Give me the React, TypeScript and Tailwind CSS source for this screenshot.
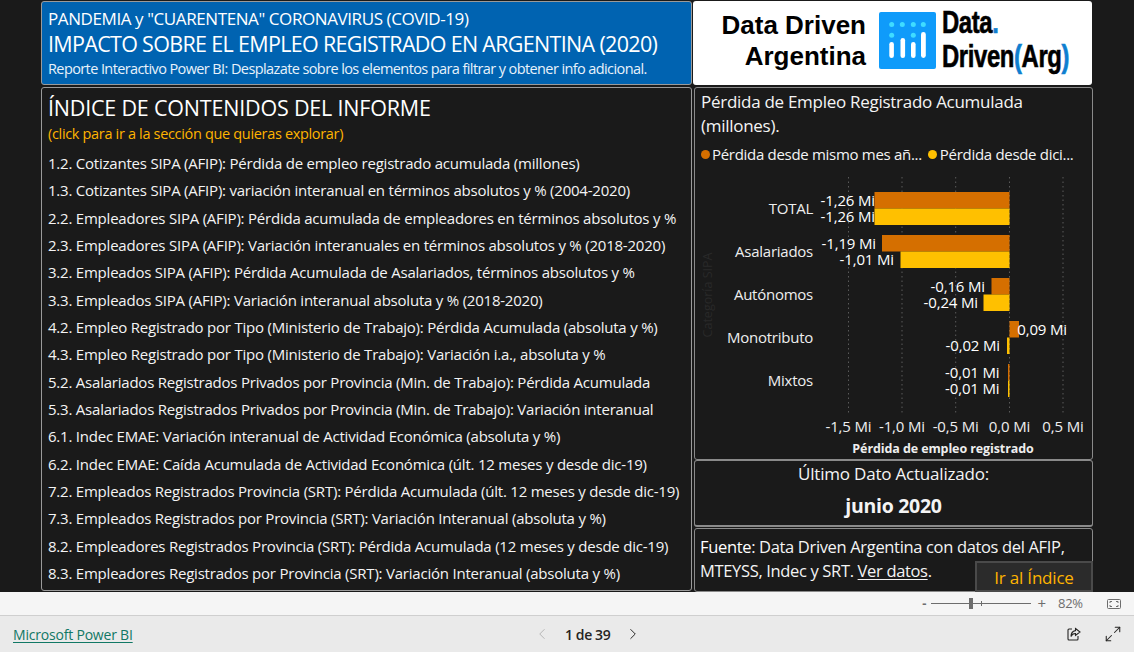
import { ChevronLeft, ChevronRight, Maximize2 } from "lucide-react";

const INDEX_ROWS = [
  "1.2. Cotizantes SIPA (AFIP): Pérdida de empleo registrado acumulada (millones)",
  "1.3. Cotizantes SIPA (AFIP): variación interanual en términos absolutos y % (2004-2020)",
  "2.2. Empleadores SIPA (AFIP): Pérdida acumulada de empleadores en términos absolutos y %",
  "2.3. Empleadores SIPA (AFIP): Variación interanuales en términos absolutos y % (2018-2020)",
  "3.2. Empleados SIPA (AFIP): Pérdida Acumulada de Asalariados, términos absolutos y %",
  "3.3. Empleados SIPA (AFIP): Variación interanual absoluta y % (2018-2020)",
  "4.2. Empleo Registrado por Tipo (Ministerio de Trabajo): Pérdida Acumulada (absoluta y %)",
  "4.3. Empleo Registrado por Tipo (Ministerio de Trabajo): Variación i.a., absoluta y %",
  "5.2. Asalariados Registrados Privados por Provincia (Min. de Trabajo): Pérdida Acumulada",
  "5.3. Asalariados Registrados Privados por Provincia (Min. de Trabajo): Variación interanual",
  "6.1. Indec EMAE: Variación interanual de Actividad Económica (absoluta y %)",
  "6.2. Indec EMAE: Caída Acumulada de Actividad Económica (últ. 12 meses y desde dic-19)",
  "7.2. Empleados Registrados Provincia (SRT): Pérdida Acumulada (últ. 12 meses y desde dic-19)",
  "7.3. Empleados Registrados por Provincia (SRT): Variación Interanual (absoluta y %)",
  "8.2. Empleadores Registrados Provincia (SRT): Pérdida Acumulada (12 meses y desde dic-19)",
  "8.3. Empleadores Registrados por Provincia (SRT): Variación Interanual (absoluta y %)",
];

// x0 is the zero line, coordinates are local to the chart svg
const X0 = 314.5;
const ORANGE = "#d56f00";
const YELLOW = "#ffc000";

const GROUPS = [
  { label: "TOTAL", y: 22, a: -135, b: -135, ta: "-1,26 Mi", tb: "-1,26 Mi", xa: 180, xb: 180 },
  { label: "Asalariados", y: 65, a: -127.5, b: -109, ta: "-1,19 Mi", tb: "-1,01 Mi", xa: 181, xb: 199 },
  { label: "Autónomos", y: 108, a: -18, b: -26, ta: "-0,16 Mi", tb: "-0,24 Mi", xa: 290, xb: 283 },
  { label: "Monotributo", y: 151, a: 9.5, b: -2.5, ta: "0,09 Mi", tb: "-0,02 Mi", xa: 372, xb: 305 },
  { label: "Mixtos", y: 194, a: -1.5, b: -1.5, ta: "-0,01 Mi", tb: "-0,01 Mi", xa: 304.5, xb: 304.5 },
];

const TICKS = [
  { x: 153.5, t: "-1,5 Mi" },
  { x: 207, t: "-1,0 Mi" },
  { x: 260.7, t: "-0,5 Mi" },
  { x: 314.5, t: "0,0 Mi" },
  { x: 368, t: "0,5 Mi" },
];

function Bar({ y, w, color }: { y: number; w: number; color: string }) {
  const x = w < 0 ? X0 + w : X0;
  return <rect x={x} y={y} width={Math.abs(w)} height={16.5} fill={color} />;
}

function LossChart() {
  return (
    <svg width="396" height="290" className="block" fontFamily="'Open Sans', sans-serif">
      {TICKS.map((t) => (
        <line key={t.x} x1={t.x} x2={t.x} y1="7" y2="245" stroke="#5a5a5a" strokeDasharray="1.5 3" />
      ))}
      {GROUPS.map((g) => (
        <g key={g.label}>
          <text x="118" y={g.y + 22} textAnchor="end" fontSize="15" letterSpacing="-0.25" fill="#eeeeee">
            {g.label}
          </text>
          <Bar y={g.y} w={g.a} color={ORANGE} />
          <Bar y={g.y + 16.5} w={g.b} color={YELLOW} />
          <text x={g.xa} y={g.y + 14} textAnchor="end" fontSize="15" letterSpacing="-0.15" fill="#ffffff">
            {g.ta}
          </text>
          <text x={g.xb} y={g.y + 30} textAnchor="end" fontSize="15" letterSpacing="-0.15" fill="#ffffff">
            {g.tb}
          </text>
        </g>
      ))}
      <text transform="translate(17 125) rotate(-90)" textAnchor="middle" fontSize="12.5" fill="#292929">
        Categoría SIPA
      </text>
      {TICKS.map((t) => (
        <text key={t.t} x={t.x} y="262" textAnchor="middle" fontSize="15" letterSpacing="-0.15" fill="#eeeeee">
          {t.t}
        </text>
      ))}
      <text x="248" y="283" textAnchor="middle" fontSize="12.5" fontWeight="700" letterSpacing="-0.1" fill="#eeeeee">
        Pérdida de empleo registrado
      </text>
    </svg>
  );
}

function DdaLogo() {
  return (
    <svg width="57" height="57" viewBox="0 0 57 57" className="shrink-0">
      <rect width="57" height="57" rx="2" fill="#0f9bfa" />
      {[12.7, 23.3, 34.3, 44.3].map((x) => (
        <circle key={x} cx={x} cy="12.6" r="2.5" fill="#3fdcff" />
      ))}
      <circle cx="12.7" cy="23.3" r="2.5" fill="#3fdcff" />
      <circle cx="34.3" cy="23.3" r="2.5" fill="#3fdcff" />
      <rect x="10.3" y="30" width="4.6" height="16" rx="2.3" fill="#ffffff" />
      <rect x="21.5" y="26" width="4.6" height="20" rx="2.3" fill="#ffffff" />
      <rect x="32" y="30" width="4.6" height="16" rx="2.3" fill="#ffffff" />
      <rect x="42" y="20" width="4.8" height="26" rx="2.4" fill="#ffffff" />
    </svg>
  );
}

export default function App() {
  return (
    <div className="flex h-[652px] w-[1134px] flex-col overflow-hidden font-['Open_Sans',sans-serif]">
      {/* Report canvas */}
      <div className="h-[592px] bg-[#1a1a1a] pl-[41px] pt-px">
        <div className="grid w-[1052px] grid-cols-[651px_400px] gap-x-[1px]">
          <div className="flex flex-col gap-[2px]">
            <div className="flex h-[84px] flex-col rounded-[3px] border border-[#9a9a9a] bg-[#0063b1] px-[6px] pt-[5px] text-white">
              <div className="text-[17px] leading-[23px] tracking-[-0.41px]">
                PANDEMIA y "CUARENTENA" CORONAVIRUS (COVID-19)
              </div>
              <div className="text-[21.5px] leading-[28px] tracking-[-0.68px]">
                IMPACTO SOBRE EL EMPLEO REGISTRADO EN ARGENTINA (2020)
              </div>
              <div className="mt-px text-[14.5px] leading-[20px] tracking-[-0.6px] text-[#e8f2fb]">
                Reporte Interactivo Power BI: Desplazate sobre los elementos para filtrar y obtener info adicional.
              </div>
            </div>
            <div className="h-[504px] rounded-[3px] border border-[#9a9a9a] px-[6px] pt-[5px] text-white">
              <div className="text-[21.5px] leading-[30px] tracking-[-0.2px]">ÍNDICE DE CONTENIDOS DEL INFORME</div>
              <div className="mt-px text-[14.5px] leading-[20px] tracking-[-0.33px] text-[#ffb400]">
                (click para ir a la sección que quieras explorar)
              </div>
              <div className="mt-[6px] flex flex-col">
                {INDEX_ROWS.map((row) => (
                  <div key={row} className="h-[27.35px] whitespace-nowrap text-[15px] leading-[27px] tracking-[-0.22px] text-[#f4f4f4]">
                    {row}
                  </div>
                ))}
              </div>
            </div>
          </div>

          <div className="flex flex-col">
            <div className="mr-px flex h-[84px] items-center rounded-[3px] bg-white pl-[20px] pr-[10px]">
              <div className="mb-[5px] w-[153px] text-right font-['Liberation_Sans',sans-serif] text-[26px] font-bold leading-[31px] text-black">
                <div className="whitespace-nowrap">Data Driven</div>
                <div>Argentina</div>
              </div>
              <div className="mb-[5px] ml-[13px]">
                <DdaLogo />
              </div>
              <div className="mb-[7px] ml-[6px] w-[130px] font-['Liberation_Sans',sans-serif] text-[31px] font-bold leading-[34px] tracking-[-0.5px] text-black [-webkit-text-stroke:0.6px_black]">
                <div className="origin-left scale-x-[0.77] whitespace-nowrap">
                  Data<span className="text-[#0f7fd0] [-webkit-text-stroke:0.6px_#0f7fd0]">.</span>
                </div>
                <div className="origin-left scale-x-[0.77] whitespace-nowrap">
                  Driven<span className="text-[#0f7fd0] [-webkit-text-stroke:0.6px_#0f7fd0]">(</span>Arg
                  <span className="text-[#0f7fd0] [-webkit-text-stroke:0.6px_#0f7fd0]">)</span>
                </div>
              </div>
            </div>
            <div className="ml-[1px] mt-[2px] flex h-[373px] flex-col rounded-[3px] border border-[#8a8a8a] px-[6px] pt-[2px]">
              <div className="text-[17px] leading-[23.5px] tracking-[-0.28px] text-[#f4f4f4]">
                Pérdida de Empleo Registrado Acumulada
                <br />
                (millones).
              </div>
              <div className="mt-[7px] flex h-[20px] items-center whitespace-nowrap text-[15px] tracking-[-0.3px] text-[#f4f4f4]">
                <span className="mr-[2px] h-[9px] w-[9px] rounded-full bg-[#d56f00]" />
                <span>Pérdida desde mismo mes añ...</span>
                <span className="ml-[6px] mr-[3px] h-[9px] w-[9px] rounded-full bg-[#ffc000]" />
                <span>Pérdida desde dici...</span>
              </div>
              <div className="-ml-[6px] mt-[6px]">
                <LossChart />
              </div>
            </div>
            <div className="ml-px flex h-[67px] flex-col items-center rounded-[3px] border border-b-2 border-[#8a8a8a] text-[#f4f4f4]">
              <div className="mt-[1px] text-[17px] leading-[24px] tracking-[-0.2px]">Último Dato Actualizado:</div>
              <div className="mt-[8px] text-[19.5px] font-bold leading-[24px] tracking-[-0.3px]">junio 2020</div>
            </div>
            <div className="relative ml-px mt-px h-[64px] rounded-[3px] border border-[#8a8a8a] px-[5px] pt-[6px] text-[16.5px] leading-[24px] tracking-[-0.34px] text-[#f4f4f4]">
              <div className="whitespace-nowrap">
                <span className="font-medium text-white">Fuente</span>: Data Driven Argentina con datos del AFIP,
              </div>
              <div className="whitespace-nowrap">
                MTEYSS, Indec y SRT. <span className="underline underline-offset-2">Ver datos</span>.
              </div>
              <div className="absolute -bottom-px -right-px flex h-[31px] w-[118px] items-center justify-center border-2 border-[#4a4a4a] bg-[#2b2b2b] pt-[2px] text-[17px] tracking-[-0.2px] text-[#ffb400]">
                Ir al Índice
              </div>
            </div>
          </div>
        </div>
      </div>

      {/* Zoom bar */}
      <div className="flex h-[24px] items-center justify-end border-b border-[#cfcfcf] bg-[#f5f5f5] pr-[13px] text-[13px] text-[#6d6d6d]">
        <span className="font-bold leading-none">-</span>
        <div className="relative ml-[5px] h-px w-[100px] bg-[#6d6d6d]">
          <div className="absolute left-[38px] top-[-5px] h-[11px] w-[4px] bg-[#6d6d6d]" />
          <div className="absolute left-[50px] top-[-2px] h-[5px] w-px bg-[#6d6d6d]" />
        </div>
        <span className="ml-[6px] text-[15px] leading-none">+</span>
        <span className="ml-[12px] w-[30px] tracking-[-0.3px]">82%</span>
        <svg width="14" height="10" viewBox="0 0 14 10" fill="none" stroke="#6d6d6d" className="ml-[19px]">
          <rect x="0.5" y="0.5" width="13" height="9" rx="1" />
          <path d="M3 4V2.5H5M9 2.5H11V4M11 6V7.5H9M5 7.5H3V6" />
        </svg>
      </div>

      {/* Footer */}
      <div className="flex h-[36px] items-center bg-[#eaeaea] pl-[13px] pr-[12px]">
        <a className="w-[520px] text-[14px] tracking-[-0.2px] text-[#117865] underline underline-offset-2">Microsoft Power BI</a>
        <ChevronLeft size={18} strokeWidth={1.3} className="text-[#b5b5b5]" />
        <span className="ml-[14px] text-[14px] font-semibold tracking-[-0.4px] text-[#252423]">1 de 39</span>
        <ChevronRight size={18} strokeWidth={1.3} className="ml-[14px] text-[#252423]" />
        <svg width="14" height="14" viewBox="0 0 14 14" fill="none" stroke="#252423" strokeWidth="1.1" className="ml-auto">
          <path d="M5 2H2a1 1 0 0 0-1 1v9a1 1 0 0 0 1 1h8a1 1 0 0 0 1-1V9" />
          <path d="M8.5 1.5 13 5 8.5 8.5V6.5C6 6.5 4.7 7.5 4 9.5 4 6 6 4 8.5 3.6Z" />
        </svg>
        <Maximize2 size={18} strokeWidth={1.4} className="ml-[23px] text-[#252423]" />
      </div>
    </div>
  );
}
